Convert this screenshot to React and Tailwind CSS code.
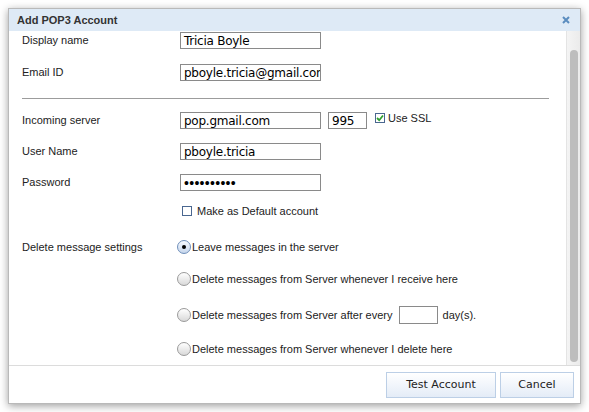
import React from 'react';

const inputFont = "font-['DejaVu_Sans',Verdana,sans-serif]";

const TextBox = ({ value, width = 'w-[141px]', height = 'h-[17px]', className = '' }) => (
  <div
    className={`${width} ${height} border border-[#8a8a8a] bg-white pl-[3px] pt-px text-[12px] leading-[15px] tracking-[-0.25px] text-black overflow-hidden whitespace-nowrap ${inputFont} ${className}`}
  >
    {value}
  </div>
);

const CheckBox = ({ checked }) => (
  <span className="w-[10px] h-[10px] border border-[#4a6790] bg-white flex items-center justify-center shrink-0">
    {checked && (
      <svg width="8" height="8" viewBox="0 0 8 8">
        <path d="M1 4 L3.2 6.2 L7 1.5" fill="none" stroke="#2fa12f" strokeWidth="1.8" />
      </svg>
    )}
  </span>
);

const Radio = ({ selected }) => (
  <span
    className={`w-[14px] h-[14px] rounded-full border flex items-center justify-center shrink-0 bg-linear-to-b ${
      selected
        ? 'border-[#6f8fba] from-[#f7faff] to-[#c6d6ec]'
        : 'border-[#9a9a9a] from-[#ffffff] to-[#d9d9d9]'
    }`}
  >
    {selected && <span className="w-[4px] h-[4px] rounded-full bg-black" />}
  </span>
);

const FieldRow = ({ label, className = '', children }) => (
  <div className={`flex items-center ${className}`}>
    <div className="w-[158px] shrink-0">{label}</div>
    {children}
  </div>
);

const RadioRow = ({ label = '', selected, className = '', children }) => (
  <div className={`flex items-center h-[14px] ${className}`}>
    <div className="w-[155px] shrink-0">{label}</div>
    <Radio selected={selected} />
    <span className="ml-[1px] flex items-center whitespace-nowrap">{children}</span>
  </div>
);

export default function App() {
  return (
    <div className="w-[589px] h-[412px] bg-white pt-[8px] pl-[8px] font-['Liberation_Sans',Arial,sans-serif] text-[11px] text-[#222]">
      <div className="w-[573px] h-[396px] border border-[#b9b9b9] bg-white shadow-[0_2px_8px_rgba(0,0,0,0.38)] flex flex-col">
        {/* title bar */}
        <div className="h-[22px] bg-[#deeaf6] flex items-center justify-between pl-[8px] pr-[10px]">
          <span className="font-bold text-[11px] text-[#333]">Add POP3 Account</span>
          <svg width="8" height="8" viewBox="0 0 8 8">
            <path d="M1 1 L7 7 M7 1 L1 7" stroke="#5b8dbf" strokeWidth="2" />
          </svg>
        </div>

        {/* body */}
        <div className="h-[334px] flex">
          <div className="flex-1 pl-[13px]">
            <FieldRow label="Display name" className="mt-[1px]">
              <TextBox value="Tricia Boyle" />
            </FieldRow>
            <FieldRow label="Email ID" className="mt-[15px]">
              <TextBox value="pboyle.tricia@gmail.com" />
            </FieldRow>

            <div className="mt-[17px] w-[527px] h-px bg-[#9c9c9c]" />

            <FieldRow label="Incoming server" className="mt-[13px]">
              <TextBox value="pop.gmail.com" />
              <div className="ml-[7px]">
                <TextBox value="995" width="w-[39px]" />
              </div>
              <div className="ml-[8px] flex items-center -mt-[5px]">
                <CheckBox checked />
                <span className="ml-[3px]">Use SSL</span>
              </div>
            </FieldRow>
            <FieldRow label="User Name" className="mt-[14px]">
              <TextBox value="pboyle.tricia" />
            </FieldRow>
            <FieldRow label="Password" className="mt-[14px]">
              <TextBox
                value={'\u2022\u2022\u2022\u2022\u2022\u2022\u2022\u2022\u2022\u2022'}
                className="font-['Liberation_Sans',Arial,sans-serif] text-[14px] tracking-[0.3px] leading-[14px]"
              />
            </FieldRow>

            <div className="mt-[13px] h-[14px] flex items-center pl-[160px]">
              <CheckBox />
              <span className="ml-[5px]">Make as Default account</span>
            </div>

            <RadioRow label="Delete message settings" selected className="mt-[22px]">
              Leave messages in the server
            </RadioRow>
            <RadioRow className="mt-[18px]">
              Delete messages from Server whenever I receive here
            </RadioRow>
            <RadioRow className="mt-[22px]">
              Delete messages from Server after every
              <span className="ml-[6px]">
                <TextBox value="" width="w-[39px]" height="h-[18px]" />
              </span>
              <span className="ml-[5px]">day(s).</span>
            </RadioRow>
            <RadioRow className="mt-[20px]">
              Delete messages from Server whenever I delete here
            </RadioRow>
          </div>

          {/* scrollbar */}
          <div className="w-[14px] border-l border-[#e4e4e4] bg-linear-to-r from-[#f4f4f4] to-[#ebebeb] pt-[19px] pb-[3px] flex justify-center">
            <div className="w-[8px] h-full rounded-full bg-[#bdbdbd]" />
          </div>
        </div>

        {/* footer */}
        <div className="flex-1 border-t border-[#dcdcdc] flex justify-end items-start gap-[4px] pt-[6px] pr-[6px]">
          <button className={`w-[110px] h-[26px] border border-[#bccfe6] bg-linear-to-b from-white to-[#e4ecf7] text-[11px] text-[#222] ${inputFont}`}>
            Test Account
          </button>
          <button className={`w-[74px] h-[26px] border border-[#bccfe6] bg-linear-to-b from-white to-[#e4ecf7] text-[11px] text-[#222] ${inputFont}`}>
            Cancel
          </button>
        </div>
      </div>
    </div>
  );
}
